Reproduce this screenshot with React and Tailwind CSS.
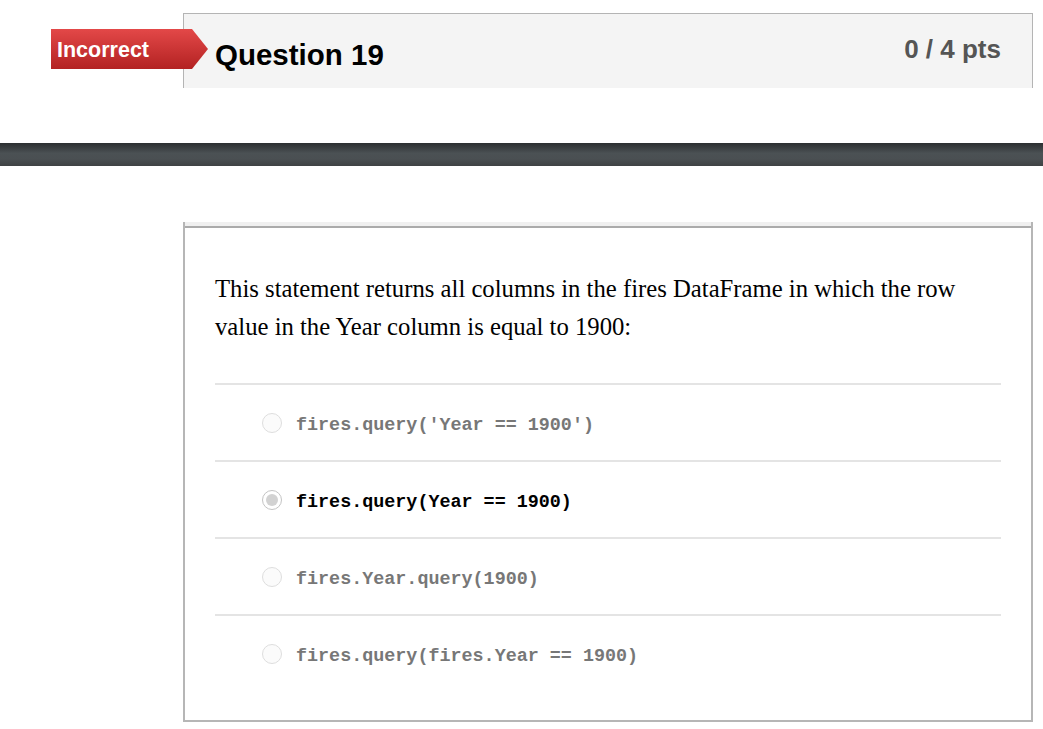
import React from 'react';

const options = [
  { text: "fires.query('Year == 1900')", selected: false },
  { text: 'fires.query(Year == 1900)', selected: true },
  { text: 'fires.Year.query(1900)', selected: false },
  { text: 'fires.query(fires.Year == 1900)', selected: false },
];

function Radio({ selected }) {
  if (selected) {
    return (
      <span className="flex h-[20px] w-[20px] shrink-0 items-center justify-center rounded-full border border-[#c4c4c4] bg-white">
        <span className="h-[12px] w-[12px] rounded-full bg-[#d2d2d2]" />
      </span>
    );
  }
  return (
    <span className="h-[20px] w-[20px] shrink-0 rounded-full border border-[#dedede] bg-[#fbfbfb]" />
  );
}

export default function App() {
  return (
    <div className="min-h-[729px] w-[1043px] bg-white font-['Liberation_Sans',Arial,sans-serif]">
      {/* question header */}
      <div className="relative pt-[13px]">
        <div className="ml-[183px] flex h-[75px] w-[850px] items-start justify-between border-l border-r border-t border-[#b4b4b4] bg-[#f4f4f4] pl-[31px] pr-[31px]">
          <h2 className="pt-[26px] text-[29.5px] font-bold leading-none text-black">Question 19</h2>
          <div className="pt-[22px] text-[26px] font-bold leading-none text-[#555]">0 / 4 pts</div>
        </div>
        <div className="absolute left-[51px] top-[29px] flex h-[40px] w-[157px] items-center bg-[linear-gradient(#e34848,#b32222)] pl-[6px] pt-[3px] [clip-path:polygon(0_0,141px_0,157px_50%,141px_100%,0_100%)]">
          <span className="text-[21.5px] font-bold leading-none text-white">Incorrect</span>
        </div>
      </div>

      {/* dark divider bar */}
      <div className="mt-[55px] h-[23px] w-full bg-[linear-gradient(#2c2f31,#4b5154_45%,#4a4f52_70%,#3f4244)]" />

      {/* question body */}
      <div className="ml-[183px] mt-[56px] w-[850px] border-2 border-t-0 border-[#b6b6b6]">
        <div className="h-[4px] bg-[#f0f0f0]" />
        <div className="h-[2px] bg-[#ababab]" />
        <div className="pl-[30px] pr-[30px] pb-[29px] pt-[42px]">
          <p className="mb-[37px] font-['Liberation_Serif','Times_New_Roman',serif] text-[24.7px] leading-[38px] text-black">
            This statement returns all columns in the fires DataFrame in which the row value in the Year column is equal to 1900:
          </p>
          {options.map((o) => (
            <div key={o.text} className="flex h-[77px] items-center border-t-2 border-[#e4e4e4] pl-[47px]">
              <Radio selected={o.selected} />
              <span
                className={
                  o.selected
                    ? "ml-[14px] pt-[6px] font-['Liberation_Mono','Courier_New',monospace] text-[18.4px] font-bold text-black"
                    : "ml-[14px] pt-[6px] font-['Liberation_Mono','Courier_New',monospace] text-[18.4px] font-bold text-[#777]"
                }
              >
                {o.text}
              </span>
            </div>
          ))}
        </div>
      </div>
    </div>
  );
}
